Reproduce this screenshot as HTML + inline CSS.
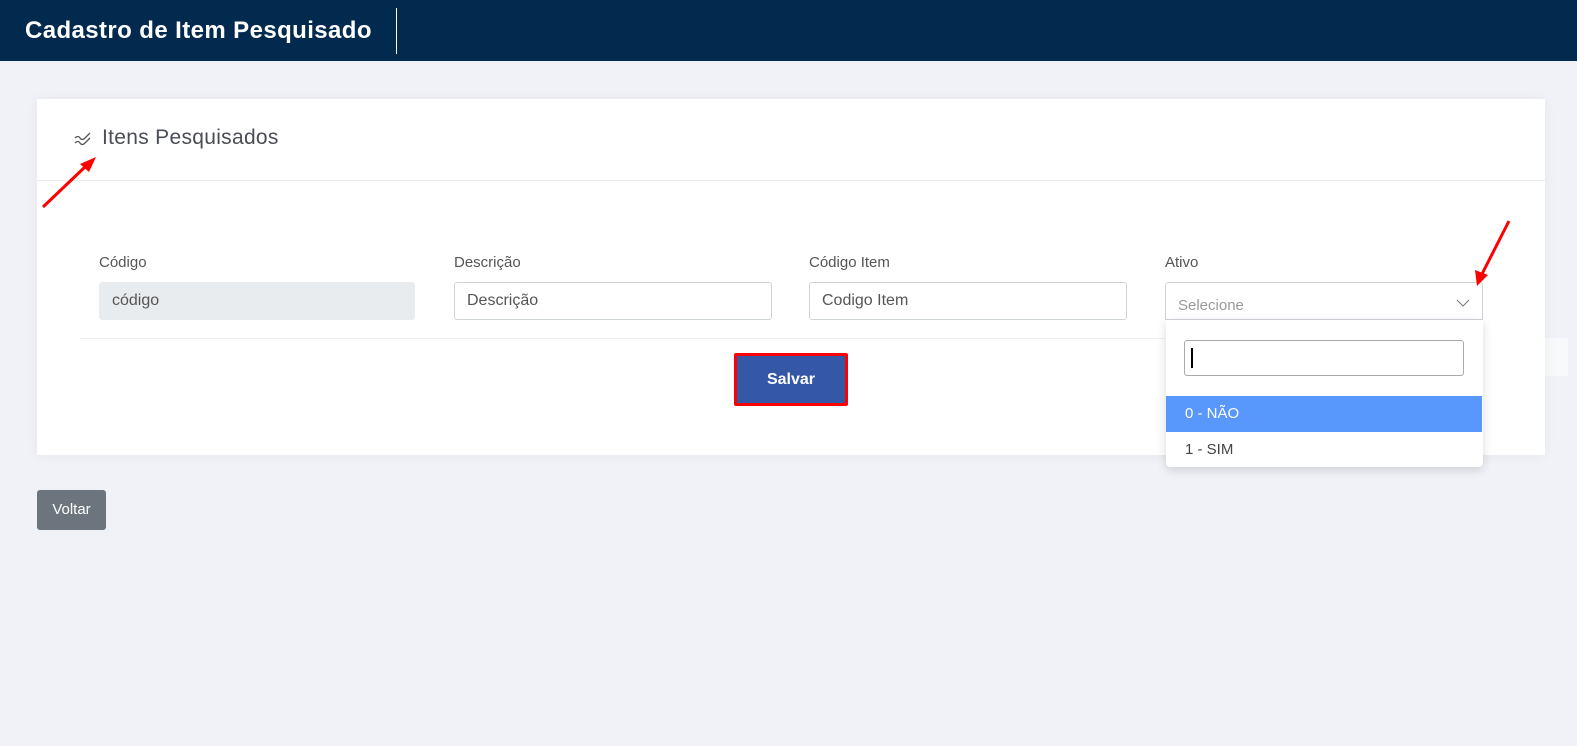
<!DOCTYPE html>
<html><head><meta charset="utf-8"><style>
body{margin:0;width:1577px;height:746px;background:#f0f2f7;font-family:"Liberation Sans",sans-serif;position:relative;overflow:hidden}
.top{position:absolute;left:0;top:0;width:1577px;height:61px;background:#022a4e}
.top h1{position:absolute;left:25px;top:17px;margin:0;color:#fff;font-size:24px;font-weight:bold;letter-spacing:0.4px}
.top .sep{position:absolute;left:396px;top:8px;width:1px;height:46px;background:#fff}
.card{position:absolute;left:37px;top:99px;width:1508px;height:356px;background:#fff;box-shadow:0 0 12px rgba(0,0,0,.05)}
.hd{position:absolute;left:0;top:0;width:100%;height:81px;border-bottom:1px solid #e8e9ec}
.hd span{position:absolute;left:65px;top:27px;font-size:21px;color:#4a4d57;letter-spacing:0.3px}
.lbl{position:absolute;top:254px;font-size:15px;color:#555}
.inp{position:absolute;top:282px;width:316px;height:38px;border:1px solid #ced4da;border-radius:3px;box-sizing:border-box;font-size:16px;color:#555;padding:9px 12px;background:#fff}
.dd{position:absolute;left:1166px;top:320px;width:317px;height:147px;background:#fff;border-radius:0 0 4px 4px;box-shadow:0 3px 10px rgba(0,0,0,.15)}
</style></head><body>
<div class="top"><h1>Cadastro de Item Pesquisado</h1><div class="sep"></div></div>
<div style="position:absolute;left:1545px;top:338px;width:23px;height:38px;background:#f8f9fa"></div>
<div class="card">
<div class="hd">
<svg style="position:absolute;left:37px;top:33px" width="18" height="14" viewBox="0 0 18 14" fill="none" stroke="#555" stroke-width="1.3"><path d="M1 6 Q4 3 6 6 T11 6 L16 1"/><path d="M1 11 Q4 8 6 11 T11 11 L16 6"/></svg>
<span>Itens Pesquisados</span></div>
<div style="position:absolute;left:43px;top:239px;width:1085px;height:1px;background:#f0f0f2"></div>
<div style="position:absolute;left:697px;top:254px;width:114px;height:53px;box-sizing:border-box;border:3px solid #f00;border-radius:2px;background:#3557a8;color:#fff;font-weight:bold;font-size:16px;text-align:center;line-height:47px">Salvar</div>
</div>
<div class="lbl" style="left:99px">Código</div>
<div class="lbl" style="left:454px">Descrição</div>
<div class="lbl" style="left:809px">Código Item</div>
<div class="lbl" style="left:1165px">Ativo</div>
<div class="inp" style="left:99px;background:#e9ecef;border-color:#e9ecef">código</div>
<div class="inp" style="left:454px;width:318px">Descrição</div>
<div class="inp" style="left:809px;width:318px">Codigo Item</div>
<div class="inp" style="left:1165px;width:318px;color:#999;font-size:15px;padding-top:14px;border-radius:3px 3px 0 0">Selecione
<svg style="position:absolute;right:12px;top:16px" width="14" height="8" viewBox="0 0 14 8" fill="none" stroke="#777" stroke-width="1"><path d="M1 1 L7 7 L13 1"/></svg></div>
<div class="dd">
<div style="position:absolute;left:18px;top:20px;width:280px;height:36px;border:1px solid #aaa;border-radius:3px;box-sizing:border-box"><div style="position:absolute;left:6px;top:7px;width:2px;height:20px;background:#000"></div></div>
<div style="position:absolute;left:0;top:76px;width:316px;height:36px;background:#5897fb;color:#fff;font-size:15px;line-height:36px;padding-left:19px;box-sizing:border-box">0 - NÃO</div>
<div style="position:absolute;left:19px;top:121px;font-size:15px;color:#444">1 - SIM</div>
</div>
<div style="position:absolute;left:37px;top:490px;width:69px;height:40px;background:#6c757d;border-radius:3px;color:#fff;font-size:15px;text-align:center;line-height:40px">Voltar</div>
<svg style="position:absolute;left:0;top:0" width="1577" height="746" fill="#f00" stroke="#f00" stroke-width="3">
<line x1="43" y1="207" x2="86" y2="166"/><polygon points="96,157 80,164 89,172" stroke="none"/>
<line x1="1509" y1="221" x2="1482" y2="274"/><polygon points="1477,286 1475,270 1488,275" stroke="none"/>
</svg>
</body></html>
